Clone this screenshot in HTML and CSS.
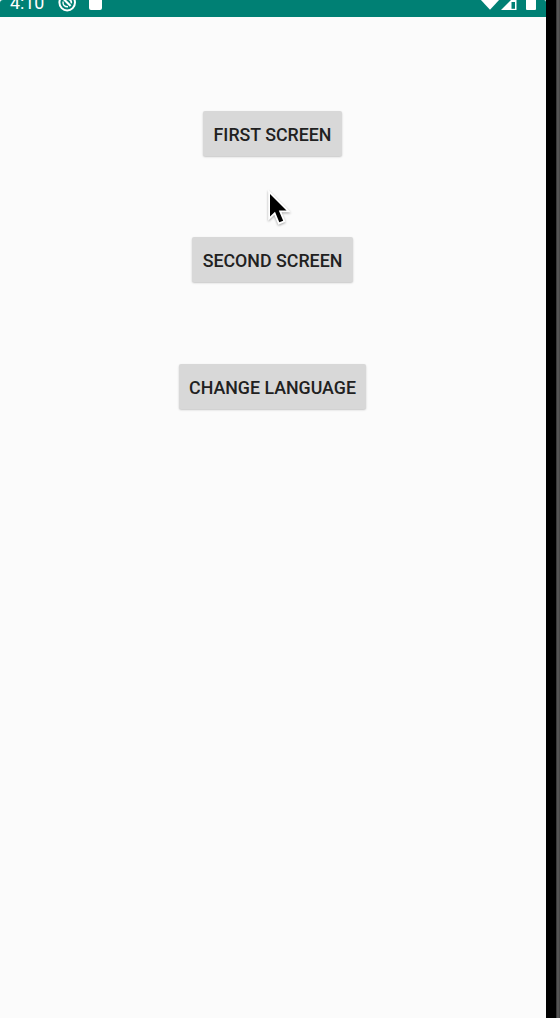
FILE: index.html
```html
<!DOCTYPE html>
<html lang="en">
<head>
<meta charset="utf-8">
<title>Screens</title>
<link rel="stylesheet" href="styles.css">
</head>
<body>
<div class="device">
  <div class="screen">
    <header class="status">
      <div class="status-left">
        <span class="clock">4:10</span>
        <svg class="sync" width="20" height="17" viewBox="0 0 20 17" fill="none" stroke="#fff">
          <circle cx="10.2" cy="2.6" r="7.8" stroke-width="2"/>
          <path d="M5.6 -2L13.6 6" stroke-width="2.2"/>
          <path d="M6 1.5Q5.6 6.8 11 6.8" stroke-width="1.4"/>
          <path d="M11 -1Q15 0 14.2 3.4" stroke-width="1.6"/>
        </svg>
        <span class="card"></span>
      </div>
      <svg class="signals" width="60" height="17" viewBox="0 0 60 17">
        <path d="M0 -1H20L10 9.7Z" fill="#fff"/>
        <path d="M21 10L32 -1H36.5V10Z" fill="#fff"/>
        <path d="M31.5 2H35V8.8H31.5Z" fill="#008074"/>
        <rect x="46" y="-2" width="10" height="12" rx="1" fill="#fff"/>
      </svg>
    </header>
    <main class="content">
      <button class="btn first">FIRST SCREEN</button>
      <button class="btn second">SECOND SCREEN</button>
      <button class="btn third">CHANGE LANGUAGE</button>
    </main>
  </div>
  <div class="bezel"></div>
  <div class="edge"></div>
</div>
<svg class="cursor" width="32" height="44" viewBox="0 0 32 44">
  <path d="M5 8V30.5L10 25.8L14.3 36.3L18.2 34.7L13.8 24.5H21.5Z"/>
</svg>
</body>
</html>
```
FILE: styles.css
```css
body {
  margin: 0;
  font-family: Roboto, sans-serif;
}
.device {
  display: flex;
  height: 1018px;
  overflow: hidden;
  background: #000;
}
.screen {
  width: 546px;
  background: #fbfbfb;
}
.bezel {
  width: 10px;
  background: #000;
}
.edge {
  width: 4px;
  background: linear-gradient(90deg, #393939 0 1px, #555 1px 3px, #484848 3px);
}
.status {
  display: flex;
  justify-content: space-between;
  height: 17px;
  overflow: hidden;
  background: #008074;
  border-radius: 3px 2px 0 0;
}
.status-left {
  display: flex;
  padding-left: 10px;
}
.clock {
  width: 47px;
  margin-top: -8px;
  font-size: 17.8px;
  line-height: 21px;
  color: #fff;
}
.card {
  width: 13px;
  height: 14px;
  margin: -4px 0 0 12px;
  background: #fff;
  border-radius: 2px;
}
.signals {
  margin-right: 6px;
}
.content {
  display: flex;
  flex-direction: column;
  align-items: center;
  gap: 81.45px;
  padding: 94px 1px 0 0;
}
.btn {
  height: 45px;
  padding: 2px 0 0;
  border: 0;
  border-radius: 2px;
  background: #d8d8d8;
  box-shadow: 0 1px 2px rgba(0, 0, 0, .22);
  font: 500 17.8px/43px Roboto, sans-serif;
  white-space: nowrap;
  color: #212121;
}
.first { width: 139px; }
.second { width: 161px; }
.third { width: 187px; }
.cursor {
  position: absolute;
  left: 265px;
  top: 186px;
  filter: drop-shadow(0 1px 1px rgba(0, 0, 0, .35));
}
.cursor path {
  fill: #000;
  stroke: #fff;
  stroke-width: 3.6px;
  paint-order: stroke;
}
```
